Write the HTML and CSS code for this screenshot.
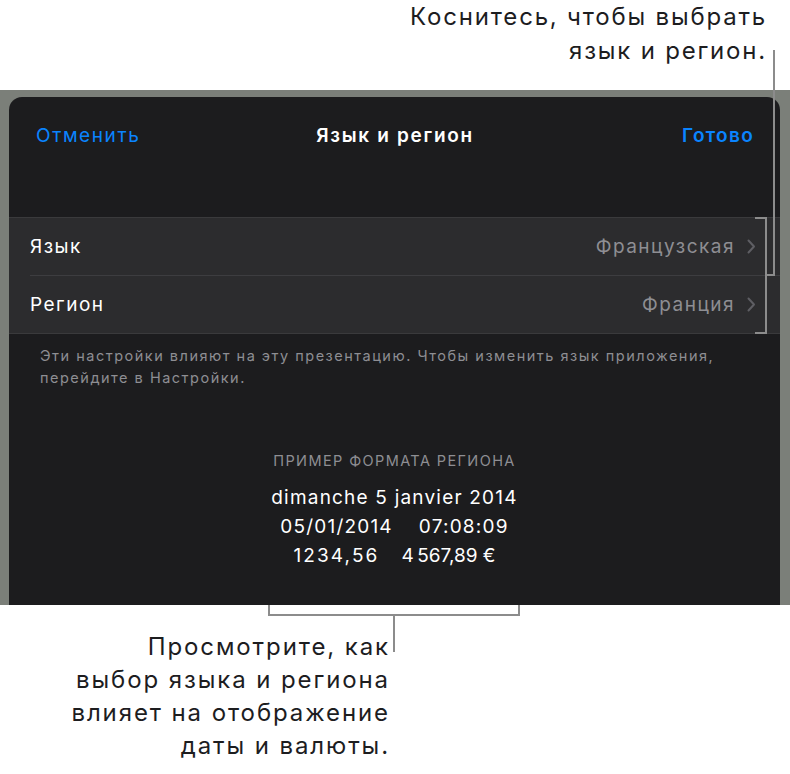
FILE: index.html
```html
<!DOCTYPE html>
<html>
<head>
    <title>Язык и регион</title>
<link rel="stylesheet" href="styles.css">
</head>
<body>
    <div class="page">
        <p class="callout callout-top">Коснитесь, чтобы выбрать<br>язык и регион.</p>

        <div class="frame">
            <div class="sheet">
                <div class="navbar">
                    <span class="nav-btn">Отменить</span>
                    <span class="nav-title">Язык и регион</span>
                    <span class="nav-btn nav-done">Готово</span>
                </div>

                <div class="group">
                    <div class="row">
                        <span class="row-label">Язык</span>
                        <span class="row-value">Французская</span>
                        <svg class="chevron" width="9" height="15" viewBox="0 0 9 15"><path d="M1.5 1.5 L7 7.5 L1.5 13.5" fill="none" stroke="#5e5e63" stroke-width="2" stroke-linecap="round" stroke-linejoin="round"/></svg>
                    </div>
                    <div class="row">
                        <span class="row-label">Регион</span>
                        <span class="row-value">Франция</span>
                        <svg class="chevron" width="9" height="15" viewBox="0 0 9 15"><path d="M1.5 1.5 L7 7.5 L1.5 13.5" fill="none" stroke="#5e5e63" stroke-width="2" stroke-linecap="round" stroke-linejoin="round"/></svg>
                    </div>
                </div>

                <p class="note">Эти настройки влияют на эту презентацию. Чтобы изменить язык приложения,<br>перейдите в Настройки.</p>

                <div class="sample">
                    <div class="sample-head">ПРИМЕР ФОРМАТА РЕГИОНА</div>
                    <div class="sample-line">dimanche 5 janvier 2014</div>
                    <div class="sample-line sample-pair"><span>05/01/2014</span><span>07:08:09</span></div>
                    <div class="sample-line sample-pair sample-money"><span>1234,56</span><span>4&#8239;567,89&nbsp;€</span></div>
                </div>
            </div>
        </div>

        <p class="callout callout-bottom">Просмотрите, как<br>выбор языка и региона<br>влияет на отображение<br>даты и валюты.</p>

        <!-- leader lines for the two callouts -->
        <svg class="leaders" width="790" height="774" viewBox="0 0 790 774">
            <g fill="none" stroke="#8c8c8c" stroke-width="2">
                <path d="M774 50 V275 H766"/>
                <path d="M755 218 H766 V333 H755"/>
                <path d="M269 605 V615 H519 V605"/>
                <path d="M394 615 V652"/>
            </g>
        </svg>
    </div>
</body>
</html>
```

FILE: styles.css
```css
body {
  margin: 0;
  background: #ffffff;
  font-family: Inter, Roboto, "Liberation Sans", sans-serif;
}

.page {
  position: relative;
  width: 790px;
  height: 774px;
  overflow: hidden;
}

.callout {
  margin: 0;
  font-size: 24px;
  line-height: 34px;
  letter-spacing: 1.8px;
  color: #1d1d1f;
  text-align: right;
}

.callout-top {
  height: 90px;
  padding-right: 23px;
}

.callout-bottom {
  width: 390px;
  margin-top: 25px;
  line-height: 33px;
  letter-spacing: 1.9px;
}

.frame {
  background: #7b7f79;
  height: 508px;
  padding: 7px 10px 0 9px;
}

.sheet {
  background: #1c1c1e;
  height: 508px;
  border-radius: 13px 13px 0 0;
  overflow: hidden;
}

.navbar {
  display: flex;
  align-items: center;
  justify-content: space-between;
  height: 76px;
  padding: 0 26px 0 27px;
  margin-bottom: 44px;
  font-size: 19px;
  letter-spacing: 1.6px;
}

.nav-btn {
  color: #0a84ff;
  width: 140px;
}

.nav-done {
  text-align: right;
  font-weight: 600;
  letter-spacing: 1.3px;
}

.nav-title {
  color: #ffffff;
  font-weight: 600;
  letter-spacing: 1.7px;
}

.group {
  background: #2c2c2e;
  border-top: 1px solid #3a3a3c;
  border-bottom: 1px solid #3a3a3c;
}

.row {
  display: flex;
  align-items: center;
  height: 57px;
  margin-left: 21px;
  padding-right: 24px;
  font-size: 19px;
  letter-spacing: 1.5px;
}

.row + .row {
  border-top: 1px solid #3d3d40;
}

.row-label {
  color: #ffffff;
  flex: 1;
}

.row-value {
  color: #8e8e93;
  margin-right: 12px;
}

.note {
  margin: 11px 0 0;
  padding-left: 31px;
  font-size: 14.5px;
  line-height: 22px;
  letter-spacing: 1.5px;
  color: #8e8e93;
}

.sample {
  margin-top: 61px;
  text-align: center;
  color: #ffffff;
}

.sample-head {
  font-size: 14.5px;
  line-height: 22px;
  letter-spacing: 1.4px;
  color: #8e8e93;
  margin-bottom: 11px;
}

.sample-line {
  font-size: 19px;
  line-height: 29px;
  letter-spacing: 1.2px;
}

.sample-pair {
  display: flex;
  justify-content: center;
  gap: 26px;
}

.sample-money {
  gap: 22px;
  letter-spacing: 2.1px;
}

.leaders {
  position: absolute;
  left: 0;
  top: 0;
  pointer-events: none;
}
```
